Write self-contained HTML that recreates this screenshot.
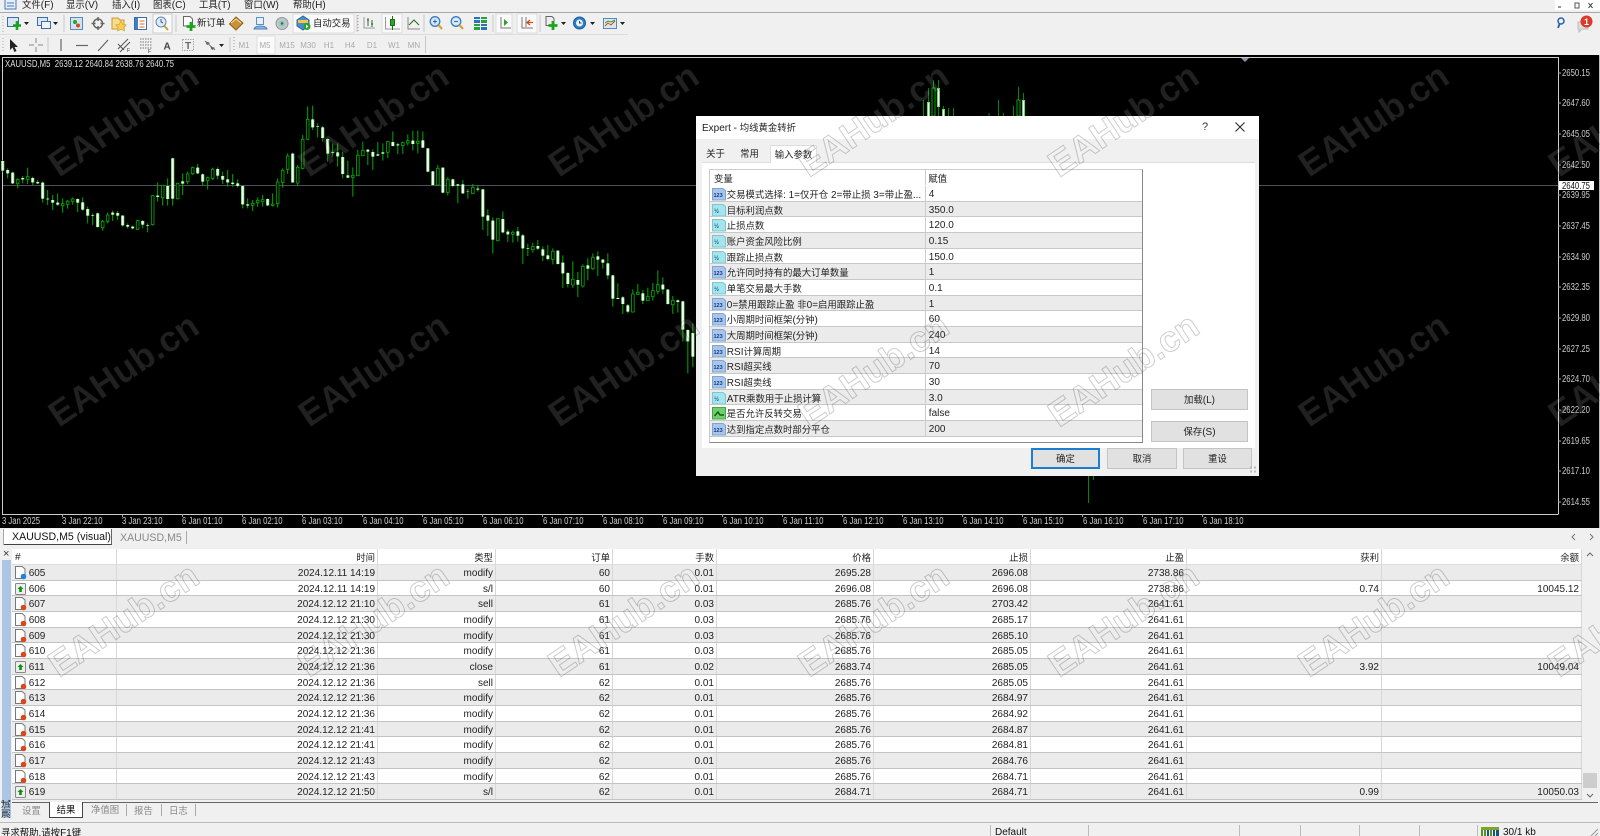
<!DOCTYPE html>
<html><head><meta charset="utf-8"><title>MT4</title>
<style>
html,body{margin:0;padding:0;width:1600px;height:836px;overflow:hidden;background:#f0f0f0}
#w{position:absolute;left:0;top:0;width:1600px;height:836px;overflow:hidden;filter:blur(.3px);font:10px/15px "Liberation Sans","Noto Sans CJK SC",sans-serif;color:#222;background:#f0f0f0}
em{font-style:normal;font-size:9.4px}
.a{position:absolute;white-space:nowrap}
svg{display:block}
.r{display:grid;grid-template-columns:105px 261px 118px 117px 104px 157px 157px 156px 195px 200px;grid-template-rows:14.67px;height:15.67px;line-height:17px;box-sizing:border-box;border-bottom:1px solid #c4c4c4;background:#fff}
.r.g{background:#ebebeb}
.r>div{border-right:1px solid #d8d8d8;text-align:right;padding-right:2px;box-sizing:border-box;overflow:hidden}
.r>div:first-child{text-align:left;padding-left:16.7px;position:relative}
.r>div:first-child svg{position:absolute;left:2px;top:1px}
.r.h{height:16.3px;grid-template-rows:15.3px;border-bottom:1px solid #ddd}
.p{display:grid;grid-template-columns:216.3px 217.7px;grid-template-rows:14.67px;height:15.67px;line-height:17px;box-sizing:border-box;border-bottom:1px solid #c8c8c8;background:#fff}
.p.g{background:#ebebeb}
.p>div{box-sizing:border-box;overflow:hidden;white-space:nowrap}
.p>div:first-child{padding-left:16.8px;border-right:1px solid #ccc;position:relative}
.p>div:first-child svg{position:absolute;left:2px;top:1px}
.p>div:last-child{padding-left:2.5px}
.b{position:absolute;box-sizing:border-box;background:#e1e1e1;border:1px solid #c4c4c4;text-align:center;line-height:19px}
</style></head><body><div id="w">

<svg width="0" height="0" style="position:absolute">
<symbol id="dr" viewBox="0 0 14 14"><path d="M1.500 .5H8L11 3V12.500H1.500Z" fill="#fff" stroke="#777"/><circle cx="9.500" cy="10.500" r="2.800" fill="#d9481c"/></symbol>
<symbol id="db" viewBox="0 0 14 14"><path d="M1.500 .5H8L11 3V12.500H1.500Z" fill="#fff" stroke="#777"/><circle cx="9.500" cy="10.500" r="2.800" fill="#1d83d4"/></symbol>
<symbol id="dg" viewBox="0 0 14 14"><rect x="1.500" y="1.500" width="10" height="11" rx="1" fill="#eee" stroke="#888"/><path d="M6.500 4L9.500 7H7.800V10H5.200V7H3.500Z" fill="#0a930a"/></symbol>
<symbol id="pb" viewBox="0 0 14 14"><path d="M.5 1.500H11L13.500 3.500V13H.5Z" fill="#a8c6ea" stroke="#7fa5d3"/><text x="1.500" y="10" font-size="5.500" font-weight="bold" fill="#123a8c" font-family="Liberation Sans">123</text></symbol>
<symbol id="pt" viewBox="0 0 14 14"><path d="M.5 1.500H11L13.500 3.500V13H.5Z" fill="#a5e4ec" stroke="#79c8d4"/><text x="2" y="10" font-size="6" font-weight="bold" fill="#0f6d8c" font-family="Liberation Sans">½</text></symbol>
<symbol id="pg" viewBox="0 0 14 14"><rect x=".5" y="1.500" width="13" height="11.500" fill="#6fcf6f" stroke="#46a646"/><path d="M2.500 10L6 6L8 9H12" fill="none" stroke="#0d5f0d" stroke-width="1.400"/></symbol>
</svg>

<!-- MENU -->
<div class="a" style="left:0;top:0;width:1600px;height:12px;background:#f0f0f0;border-bottom:1px solid #a8a8a8;overflow:hidden;line-height:10px">
<svg class="a" style="left:4px;top:-3px" width="13" height="13"><rect x="1" y="1" width="11" height="11" fill="#e6eefa" stroke="#4a78b8"/><path d="M3 6h7M3 9h7" stroke="#4a78b8"/></svg>
<span class="a" style="left:22px;top:0"><em>文件</em>(F)</span>
<span class="a" style="left:66px;top:0"><em>显示</em>(V)</span>
<span class="a" style="left:112px;top:0"><em>插入</em>(I)</span>
<span class="a" style="left:153px;top:0"><em>图表</em>(C)</span>
<span class="a" style="left:199px;top:0"><em>工具</em>(T)</span>
<span class="a" style="left:244px;top:0"><em>窗口</em>(W)</span>
<span class="a" style="left:293px;top:0"><em>帮助</em>(H)</span>
<div class="a" style="left:1555px;top:0;width:45px;height:10px;background:#fff"></div>
<svg class="a" style="left:1555px;top:0" width="45" height="11"><path d="M3 7h3" stroke="#333"/><rect x="20" y="3" width="4" height="5" fill="none" stroke="#555"/><path d="M33.500 3l4 5m0-5l-4 5" stroke="#333"/></svg>
</div>

<!-- TOOLBARS -->
<svg class="a" style="left:0;top:13px" width="1600" height="42" viewBox="0 13 1600 42" font-family="Liberation Sans,Noto Sans CJK SC,sans-serif">
<defs><path id="ar" d="M0 0h5l-2.500 3z" fill="#222"/></defs>
<path d="M3 16v16M3 38v14" stroke="#aaa" stroke-dasharray="1 2"/>
<path d="M64 15v17M176 15v17M357 15v17M424 15v17M493 15v17M540 15v17M48 37v15M230 37v15M425.500 36v17" stroke="#c8c8c8"/>
<path d="M234 37v15M358 15v17" stroke="#999" stroke-dasharray="1 2"/>
<path d="M0 34.500H628" stroke="#ddd"/>
<rect x="153" y="14" width="19" height="19" fill="#fafafa" stroke="#ccc"/>
<rect x="293" y="14" width="61" height="19" fill="#fafafa" stroke="#ddd"/>
<rect x="382" y="14" width="20" height="19" fill="#fafafa" stroke="#ddd"/>
<rect x="496" y="14" width="16" height="19" fill="#fafafa" stroke="#ddd"/>
<rect x="517" y="14" width="20" height="19" fill="#fafafa" stroke="#ddd"/>
<rect x="257" y="36" width="18" height="18" fill="#fafafa" stroke="#ddd"/>
<rect x="7.500" y="17.500" width="11" height="9" fill="#d9e6f5" stroke="#3a6ea5"/><path d="M17 21v9M13 25.500h8" stroke="#1ba51b" stroke-width="2.600"/>
<use href="#ar" x="24" y="22"/>
<rect x="37.500" y="17.500" width="10" height="8" fill="#dbe7f5" stroke="#3a6ea5"/><rect x="41.500" y="21.500" width="9" height="7" fill="#eef3fa" stroke="#3a6ea5"/>
<use href="#ar" x="53" y="22"/>
<rect x="70.500" y="17.500" width="12" height="12" fill="#cfe3f5" stroke="#5a8ab5"/><circle cx="75" cy="22" r="2" fill="#27a327"/><circle cx="78" cy="25.500" r="2" fill="#d9481c"/>
<circle cx="98" cy="23.500" r="4.500" fill="none" stroke="#666" stroke-width="1.500"/><path d="M98 17v4M98 26v4M91.500 23.500h4M100.500 23.500h4" stroke="#666" stroke-width="1.500"/>
<path d="M112 18h6l2 2h4v9h-12z" fill="#f8dc8a" stroke="#c79a2e"/><path d="M121 21l1.800 3.500 3.500.5-2.500 2.500.6 3.500-3.400-1.800-3.400 1.800.6-3.500-2.500-2.500 3.500-.5z" fill="#f6cf4f" stroke="#c79a2e" stroke-width=".6"/>
<rect x="134.500" y="17.500" width="12" height="12" fill="#fff" stroke="#3a6ea5"/><rect x="135" y="18" width="3" height="11" fill="#3f7fc6"/><path d="M139.500 21h5M139.500 24h5M139.500 27h5" stroke="#d9682c"/>
<circle cx="161" cy="22" r="5" fill="#dfeaf7" stroke="#5a8ab5"/><path d="M161 19v3l2 1" stroke="#555" fill="none"/><path d="M164.500 26l3.500 4" stroke="#c9a033" stroke-width="2"/>
<path d="M183.500 16.500H190l2.500 2.500v7H183.500Z" fill="#fff" stroke="#666"/><path d="M191 22v9M186.500 26.500h9" stroke="#1ba51b" stroke-width="2.800"/>
<text x="197" y="26" font-size="9.400" fill="#222">新订单</text>
<path d="M236 17l7 6-7 7-6.500-6z" fill="#c9913a" stroke="#8a6418"/><path d="M231 23l5-4 5 4" stroke="#f6df9a" fill="none"/>
<path d="M256.500 17.500h7v7h-7z" fill="#e8f0fa" stroke="#5d8fc8"/><path d="M254 29c1-4 12-4 13 0z" fill="#8db5e2" stroke="#4f82bc"/>
<circle cx="282" cy="23.500" r="6" fill="#bcc7cf" stroke="#8d989f"/><circle cx="282" cy="23.500" r="3" fill="#9fc0b4"/><circle cx="282" cy="23.500" r="1.200" fill="#1f7a3a"/>
<path d="M297 20l6-4 6 4v6l-6 4-6-4z" fill="#4b8dcb" stroke="#2e65a0"/><path d="M298 20h10v3h-10z" fill="#f3c84a"/><circle cx="307" cy="26.500" r="3.500" fill="#20a52a"/><path d="M306 24.500l2.500 2-2.500 2z" fill="#fff"/>
<text x="313" y="26.500" font-size="9.400" fill="#222">自动交易</text>
<path d="M364 17v11h11" stroke="#999" fill="none"/><path d="M368 18v8M367 20h2M372 20v7M371 24h2" stroke="#2c6b2c" fill="none"/>
<path d="M385.500 17v12H400" stroke="#999" fill="none"/><path d="M392.500 16v14" stroke="#1d6d1d"/><rect x="390.500" y="19.500" width="4" height="6" fill="#2ba52b" stroke="#1d6d1d"/>
<path d="M408 17v12h12" fill="none" stroke="#888"/><path d="M409 25l5-5 5 5" fill="none" stroke="#2c6b2c" stroke-width="1.100"/>
<circle cx="435" cy="21.500" r="4.800" fill="#d6e8f8" stroke="#3a7cc0" stroke-width="1.300"/><path d="M433 21.500h4M435 19.500v4" stroke="#2a6cb0"/><path d="M438.500 25l3.500 4" stroke="#d5a52f" stroke-width="2.200"/>
<circle cx="456" cy="21.500" r="4.800" fill="#d6e8f8" stroke="#3a7cc0" stroke-width="1.300"/><path d="M454 21.500h4" stroke="#2a6cb0"/><path d="M459.500 25l3.500 4" stroke="#d5a52f" stroke-width="2.200"/>
<rect x="474" y="17" width="6" height="6" fill="#2f6fb5"/><rect x="481" y="17" width="6" height="6" fill="#2e9e3c"/><rect x="474" y="24" width="6" height="6" fill="#2e9e3c"/><rect x="481" y="24" width="6" height="6" fill="#2f6fb5"/><path d="M474 19.500h13M474 26.500h13" stroke="#dff"/>
<path d="M501 17v11h10" fill="none" stroke="#777"/><path d="M504 19l4 3.500-4 3.500z" fill="#22a52a"/>
<path d="M522 17v11h11" fill="none" stroke="#777"/><path d="M526 17v10" stroke="#777"/><path d="M533 22.500h-5M530 20l-3 2.500 3 2.500" fill="none" stroke="#d9481c" stroke-width="1.300"/>
<path d="M546 16.500h6l2 2v7h-8z" fill="#eee" stroke="#666"/><path d="M553 21v9M548.500 25.500h9" stroke="#1ba51b" stroke-width="2.800"/>
<use href="#ar" x="561" y="22"/>
<circle cx="579.500" cy="23" r="6" fill="#2b7fc8" stroke="#195c9a"/><circle cx="579.500" cy="23" r="3.500" fill="#eaf3fb"/><path d="M579.500 21v2h2" stroke="#444" fill="none"/>
<use href="#ar" x="590" y="22"/>
<rect x="603.500" y="18.500" width="13" height="10" fill="#dbe8f4" stroke="#5a8ab5"/><path d="M605 26l3-3 3 2 4-4" stroke="#d9481c" fill="none"/><path d="M605 23l3-2 3 1 4-2" stroke="#27a327" fill="none"/>
<use href="#ar" x="620" y="22"/>
<path d="M10 39v11l2.500-2.500 2 4.500 2-1-2-4h3.500z" fill="#222"/>
<path d="M36 38v14M29 45h14" stroke="#888"/><path d="M34 43h4v4h-4z" fill="#f0f0f0"/>
<path d="M61 39v12" stroke="#666" stroke-width="1.200"/>
<path d="M76 45.500h12" stroke="#666" stroke-width="1.200"/>
<path d="M98 51l10-11" stroke="#666" stroke-width="1.200"/>
<path d="M118 49l10-10M120 52l10-10M118 44l6 6" stroke="#555" fill="none"/><text x="127" y="52" font-size="5" fill="#333">F</text>
<path d="M140 39h12M140 42h12M140 45h12M140 48h12" stroke="#777" stroke-dasharray="1.500 1"/><text x="148" y="53" font-size="5" fill="#333">F</text>
<text x="163.500" y="49.500" font-size="10" font-weight="bold" fill="#444">A</text>
<rect x="182.500" y="39.500" width="11" height="11" fill="none" stroke="#aaa" stroke-dasharray="1.500 1"/><text x="185" y="49" font-size="10" font-weight="bold" fill="#666">T</text>
<path d="M205 41l5 2-3 2zM210 46l5 2-3 2z" fill="#444"/><path d="M205 41l10 9" stroke="#777"/>
<use href="#ar" x="219" y="44"/>
<g font-size="8" fill="#aaa" text-anchor="middle">
<text x="244" y="48">M1</text><text x="265" y="48">M5</text><text x="287" y="48">M15</text><text x="308" y="48">M30</text><text x="329" y="48">H1</text><text x="350" y="48">H4</text><text x="372" y="48">D1</text><text x="394" y="48">W1</text><text x="414" y="48">MN</text>
</g>
<circle cx="1561" cy="21" r="3" fill="none" stroke="#2a5fa8" stroke-width="1.500"/><path d="M1559.500 24l-1.500 4" stroke="#2a5fa8" stroke-width="1.800"/>
<path d="M1578 22h10v7h-6l-3 3v-3h-1z" fill="#ddd" stroke="#bbb"/><circle cx="1586.500" cy="21.500" r="6" fill="#d93a2b"/><text x="1586.500" y="25" font-size="9" font-weight="bold" fill="#fff" text-anchor="middle">1</text>
</svg>

<!-- CHART -->
<svg class="a" style="left:0;top:55px" width="1600" height="473" viewBox="0 55 1600 473" font-family="Liberation Sans,sans-serif">
<defs>
<path id="w1" d="M8 303V332M23 330V340M38 338V370M68 354V358M98 354V367M113 366V370M128 368V416M143 416V418M158 420V428M173 428V434M233 417V428M248 427V449M263 447V467M278 466V468M293 460V501M338 458V464M353 459V467M368 467V496M383 495V500M398 500V505M428 483V494M443 495V497M473 407V411M503 378V417M518 295V416M548 364V371M593 323V340M608 343V365M653 327V347M668 348V359M683 358V367M698 368V372M713 370V378M728 378V433M743 433V437M803 417V436M878 281V367M938 178V202M953 198V200M968 202V234M983 237V281M998 276V278M1013 277V289M1028 291V342"/>
<path id="w2" d="M25 256V263M85 179V185M100 186V200M115 193V197M130 187V191M160 156V168M175 163V166M220 152V162M250 151V173M265 175V245M280 244V285M310 233V308M340 268V288M355 283V287M370 283V310M385 305V306M415 296V299M430 298V380M445 376V392M460 392V449M490 387V427M505 425V433M535 424V437M550 436V475M565 475V477M595 468V476M610 478V497M625 496V507M655 482V522M670 518V550M685 549V582M715 570V584M745 526V536M775 499V509M790 509V518M805 520V556M820 556V626M835 624V627M850 622V642M865 646V665M910 610V632M970 584V598M985 599V642M1015 631V636M1030 634V719M1045 720V754M1060 729V800"/>
</defs>
<rect x="0" y="55" width="1600" height="473" fill="#000"/>
<path d="M2.500 57V514.500H1558M2.500 57.500H1558.500V514.500" fill="none" stroke="#ccc"/>
<path d="M3 185.500H1558" stroke="#4c5058"/>
<path d="M1241 58h8l-4 4z" fill="#8995a5"/>
<text x="5" y="67" font-size="10" fill="#ddd" textLength="169" lengthAdjust="spacingAndGlyphs" xml:space="preserve">XAUUSD,M5  2639.12 2640.84 2638.76 2640.75</text>

<g transform="translate(0,60) scale(.33333)" fill="none">
<path stroke="#0a0" stroke-width="3" d="M8 300V335M23 325V355M38 335V372M53 355V385M68 348V370M83 323V372M98 350V375M113 360V372M128 365V428M143 390V435M158 405V450M173 400V438M188 415V458M203 420V446M218 412V434M233 415V456M248 412V452M263 440V490M278 460V495M293 458V503M308 480V512M323 458V490M338 452V483M353 453V480M368 465V500M383 490V505M398 497V508M413 480V510M428 480V505M443 490V517M458 405V497M473 367V425M488 375V437M503 355V437M518 293V437M533 368V418M548 340V405M563 335V372M578 320V345M593 312V342M608 340V378M623 350V388M638 323V360M653 322V358M668 335V372M683 330V380M698 342V380M713 358V382M728 377V445M743 415V445M758 420V453M773 412V440M788 405V440M803 415V438M818 400V440M833 355V442M848 325V383M863 280V342M878 278V369M893 315V378M908 225V328M923 140V240M938 137V210M953 190V232M968 198V245M983 235V305M998 250V290M1013 250V320M1028 275V355"/>
<path stroke="#0a0" stroke-width="2.500" fill="#000" d="M49 358h8v13h-8zM79 350h8v8h-8zM184 431h8v6h-8zM199 424h8v9h-8zM214 417h8v7h-8zM304 484h8v19h-8zM319 465h8v19h-8zM409 482h8v26h-8zM454 407h8v87h-8zM484 376h8v37h-8zM529 370h8v46h-8zM559 342h8v23h-8zM574 323h8v18h-8zM619 353h8v9h-8zM634 328h8v27h-8zM754 430h8v6h-8zM769 421h8v7h-8zM784 419h8v6h-8zM814 432h8v4h-8zM829 366h8v65h-8zM844 331h8v36h-8zM859 288h8v40h-8zM889 322h8v47h-8zM904 238h8v87h-8zM919 178h8v60h-8z"/>
<use href="#w1" stroke="#4c4" stroke-width="10"/>
<use href="#w1" stroke="#fff" stroke-width="6"/>
</g>
<g transform="translate(-.5,0)"><g transform="translate(340,90) scale(.33333)" fill="none">
<path stroke="#0a0" stroke-width="3" d="M25 212V265M40 232V320M55 180V258M70 155V198M85 178V225M100 178V240M115 156V198M130 160V212M145 153V204M160 124V170M175 158V192M190 155V192M205 133V167M220 122V182M235 122V190M250 124V175M265 174V247M280 243V287M295 225V288M310 232V310M325 262V316M340 266V292M355 282V340M370 270V312M385 297V326M400 282V312M415 285V305M430 296V420M445 358V438M460 382V491M475 385V453M490 364V430M505 418V456M520 422V458M535 411V455M550 432V522M565 461V498M580 458V488M595 450V480M610 469V513M625 465V512M640 475V523M655 481V524M670 496V594M685 546V592M700 514V594M715 546V621M730 523V593M745 505V571M760 490V540M775 484V558M790 507V536M805 490V568M820 555V650M835 580V627M850 618V672M865 642V670M880 598V668M895 582V615M910 600V642M925 593V633M940 579V632M955 541V612M970 562V612M985 597V644M1000 618V672M1015 628V668M1030 632V755M1045 718V850M1060 700V831"/>
<path stroke="#0a0" stroke-width="2.500" fill="#000" d="M36 256h8v6h-8zM51 196h8v61h-8zM66 181h8v16h-8zM141 155h8v32h-8zM186 158h8v9h-8zM201 152h8v7h-8zM231 154h8v6h-8zM291 235h8v50h-8zM321 268h8v39h-8zM396 292h8v19h-8zM471 386h8v66h-8zM516 427h8v6h-8zM576 470h8v9h-8zM636 484h8v24h-8zM696 568h8v17h-8zM726 529h8v59h-8zM756 502h8v34h-8zM876 612h8v54h-8zM891 607h8v6h-8zM921 620h8v12h-8zM936 602h8v18h-8zM951 584h8v20h-8zM996 631h8v13h-8z"/>
<use href="#w2" stroke="#4c4" stroke-width="10"/>
<use href="#w2" stroke="#fff" stroke-width="6"/>
</g></g>
<path stroke="#080" d="M923.500 100V116M928.500 88V116M933.500 80V116M938.500 80V116M943.500 106V116M948.500 108V116M953.500 108V116M989 113V116M998.500 100V116M1003.500 113V116M1013.500 106V116M1018.500 87V116M1023.500 93V116M1088.500 476V503M1093.500 476V480"/>
<path stroke="#6d6" stroke-width="3" d="M928.500 102V116M938.500 88V107M943.500 109V116M1023.500 100V116"/>
<path stroke="#fff" d="M928.500 103V116M938.500 89V106M943.500 110V116M1023.500 101V116"/>
<path stroke="#0a0" fill="#000" d="M932 88h3v28h-3zM1017 100h3v16h-3z"/>

<path stroke="#aaa" d="M1558 73h3M1558 103h3M1558 134h3M1558 165h3M1558 195h3M1558 226h3M1558 257h3M1558 287h3M1558 318h3M1558 349h3M1558 379h3M1558 410h3M1558 441h3M1558 471h3M1558 502h3"/>
<g font-size="10" fill="#ccc">
<text x="1562" y="76" textLength="28" lengthAdjust="spacingAndGlyphs">2650.15</text>
<text x="1562" y="106" textLength="28" lengthAdjust="spacingAndGlyphs">2647.60</text>
<text x="1562" y="137" textLength="28" lengthAdjust="spacingAndGlyphs">2645.05</text>
<text x="1562" y="168" textLength="28" lengthAdjust="spacingAndGlyphs">2642.50</text>
<text x="1562" y="198" textLength="28" lengthAdjust="spacingAndGlyphs">2639.95</text>
<text x="1562" y="229" textLength="28" lengthAdjust="spacingAndGlyphs">2637.45</text>
<text x="1562" y="260" textLength="28" lengthAdjust="spacingAndGlyphs">2634.90</text>
<text x="1562" y="290" textLength="28" lengthAdjust="spacingAndGlyphs">2632.35</text>
<text x="1562" y="321" textLength="28" lengthAdjust="spacingAndGlyphs">2629.80</text>
<text x="1562" y="352" textLength="28" lengthAdjust="spacingAndGlyphs">2627.25</text>
<text x="1562" y="382" textLength="28" lengthAdjust="spacingAndGlyphs">2624.70</text>
<text x="1562" y="413" textLength="28" lengthAdjust="spacingAndGlyphs">2622.20</text>
<text x="1562" y="444" textLength="28" lengthAdjust="spacingAndGlyphs">2619.65</text>
<text x="1562" y="474" textLength="28" lengthAdjust="spacingAndGlyphs">2617.10</text>
<text x="1562" y="505" textLength="28" lengthAdjust="spacingAndGlyphs">2614.55</text>
</g>
<rect x="1559" y="181" width="35" height="9" fill="#fff"/>
<text x="1562" y="189" font-size="10" fill="#111" textLength="28" lengthAdjust="spacingAndGlyphs">2640.75</text>

<path stroke="#aaa" d="M62.500 514v3M122.500 514v3M182.500 514v3M242.500 514v3M302.500 514v3M362.500 514v3M422.500 514v3M482.500 514v3M542.500 514v3M602.500 514v3M662.500 514v3M722.500 514v3M782.500 514v3M842.500 514v3M902.500 514v3M962.500 514v3M1022.500 514v3M1082.500 514v3M1142.500 514v3M1202.500 514v3"/>
<g font-size="10" fill="#ccc">
<text x="2" y="524" textLength="38" lengthAdjust="spacingAndGlyphs">3 Jan 2025</text>
<text x="62" y="524" textLength="40.500" lengthAdjust="spacingAndGlyphs">3 Jan 22:10</text>
<text x="122" y="524" textLength="40.500" lengthAdjust="spacingAndGlyphs">3 Jan 23:10</text>
<text x="182" y="524" textLength="40.500" lengthAdjust="spacingAndGlyphs">6 Jan 01:10</text>
<text x="242" y="524" textLength="40.500" lengthAdjust="spacingAndGlyphs">6 Jan 02:10</text>
<text x="302" y="524" textLength="40.500" lengthAdjust="spacingAndGlyphs">6 Jan 03:10</text>
<text x="363" y="524" textLength="40.500" lengthAdjust="spacingAndGlyphs">6 Jan 04:10</text>
<text x="423" y="524" textLength="40.500" lengthAdjust="spacingAndGlyphs">6 Jan 05:10</text>
<text x="483" y="524" textLength="40.500" lengthAdjust="spacingAndGlyphs">6 Jan 06:10</text>
<text x="543" y="524" textLength="40.500" lengthAdjust="spacingAndGlyphs">6 Jan 07:10</text>
<text x="603" y="524" textLength="40.500" lengthAdjust="spacingAndGlyphs">6 Jan 08:10</text>
<text x="663" y="524" textLength="40.500" lengthAdjust="spacingAndGlyphs">6 Jan 09:10</text>
<text x="723" y="524" textLength="40.500" lengthAdjust="spacingAndGlyphs">6 Jan 10:10</text>
<text x="783" y="524" textLength="40.500" lengthAdjust="spacingAndGlyphs">6 Jan 11:10</text>
<text x="843" y="524" textLength="40.500" lengthAdjust="spacingAndGlyphs">6 Jan 12:10</text>
<text x="903" y="524" textLength="40.500" lengthAdjust="spacingAndGlyphs">6 Jan 13:10</text>
<text x="963" y="524" textLength="40.500" lengthAdjust="spacingAndGlyphs">6 Jan 14:10</text>
<text x="1023" y="524" textLength="40.500" lengthAdjust="spacingAndGlyphs">6 Jan 15:10</text>
<text x="1083" y="524" textLength="40.500" lengthAdjust="spacingAndGlyphs">6 Jan 16:10</text>
<text x="1143" y="524" textLength="40.500" lengthAdjust="spacingAndGlyphs">6 Jan 17:10</text>
<text x="1203" y="524" textLength="40.500" lengthAdjust="spacingAndGlyphs">6 Jan 18:10</text>
</g>
<path d="M1599.500 55V528" stroke="#bbb"/>
</svg>

<!-- DIALOG -->
<div class="a" style="left:696px;top:116px;width:563px;height:360px;background:#f0f0f0">
<div class="a" style="left:0;top:0;width:563px;height:23px;background:#fff;line-height:23px;padding-left:6px;box-sizing:border-box">Expert - <em>均线黄金转折</em></div>
<span class="a" style="left:506px;top:4px;font-size:11px;color:#333">?</span>
<svg class="a" style="left:539px;top:6px" width="10" height="10"><path d="M.5 .5l9 9m0-9l-9 9" stroke="#222"/></svg>
<div class="a" style="left:2px;top:29px;width:35px;height:17px;line-height:18px;text-align:center;background:#f0f0f0"><em>关于</em></div>
<div class="a" style="left:37px;top:29px;width:33px;height:17px;line-height:18px;text-align:center;background:#f0f0f0"><em>常用</em></div>
<div class="a" style="left:6px;top:46px;width:552.500px;height:286px;background:#fff;border-top:1px solid #ddd;box-sizing:border-box"></div>
<div class="a" style="left:74px;top:29px;width:47px;height:18px;line-height:17px;text-align:center;background:#fff;border:1px solid #ddd;border-bottom:0;box-sizing:border-box"><em>输入参数</em></div>

<div class="a" style="left:13px;top:53px;width:434px;height:274px;background:#fff;border:1px solid;border-color:#ccc #888 #888 #ccc;box-sizing:border-box;overflow:hidden;white-space:normal">
<div class="p" style="height:16px;border-bottom:0"><div style="padding-left:4px"><em>变量</em></div><div style="padding-left:2px"><em>赋值</em></div></div>
<div class="p"><div><svg width="14" height="14"><use href="#pb"/></svg><em>交易模式选择</em>: 1=<em>仅开仓</em> 2=<em>带止损</em> 3=<em>带止盈</em>...</div><div>4</div></div>
<div class="p g"><div><svg width="14" height="14"><use href="#pt"/></svg><em>目标利润点数</em></div><div>350.0</div></div>
<div class="p"><div><svg width="14" height="14"><use href="#pt"/></svg><em>止损点数</em></div><div>120.0</div></div>
<div class="p g"><div><svg width="14" height="14"><use href="#pt"/></svg><em>账户资金风险比例</em></div><div>0.15</div></div>
<div class="p"><div><svg width="14" height="14"><use href="#pt"/></svg><em>跟踪止损点数</em></div><div>150.0</div></div>
<div class="p g"><div><svg width="14" height="14"><use href="#pb"/></svg><em>允许同时持有的最大订单数量</em></div><div>1</div></div>
<div class="p"><div><svg width="14" height="14"><use href="#pt"/></svg><em>单笔交易最大手数</em></div><div>0.1</div></div>
<div class="p g"><div><svg width="14" height="14"><use href="#pb"/></svg>0=<em>禁用跟踪止盈</em> <em>非</em>0=<em>启用跟踪止盈</em></div><div>1</div></div>
<div class="p"><div><svg width="14" height="14"><use href="#pb"/></svg><em>小周期时间框架</em>(<em>分钟</em>)</div><div>60</div></div>
<div class="p g"><div><svg width="14" height="14"><use href="#pb"/></svg><em>大周期时间框架</em>(<em>分钟</em>)</div><div>240</div></div>
<div class="p"><div><svg width="14" height="14"><use href="#pb"/></svg>RSI<em>计算周期</em></div><div>14</div></div>
<div class="p g"><div><svg width="14" height="14"><use href="#pb"/></svg>RSI<em>超买线</em></div><div>70</div></div>
<div class="p"><div><svg width="14" height="14"><use href="#pb"/></svg>RSI<em>超卖线</em></div><div>30</div></div>
<div class="p g"><div><svg width="14" height="14"><use href="#pt"/></svg>ATR<em>乘数用于止损计算</em></div><div>3.0</div></div>
<div class="p"><div><svg width="14" height="14"><use href="#pg"/></svg><em>是否允许反转交易</em></div><div>false</div></div>
<div class="p g"><div><svg width="14" height="14"><use href="#pb"/></svg><em>达到指定点数时部分平仓</em></div><div>200</div></div>
</div>

<div class="b" style="left:455px;top:273px;width:97px;height:21px"><em>加载</em>(L)</div>
<div class="b" style="left:455px;top:305px;width:97px;height:21px"><em>保存</em>(S)</div>
<div class="b" style="left:335px;top:332px;width:69px;height:21px;border:2px solid #1a7fd0;line-height:18px"><em>确定</em></div>
<div class="b" style="left:411px;top:332px;width:70px;height:21px"><em>取消</em></div>
<div class="b" style="left:487px;top:332px;width:69px;height:21px"><em>重设</em></div>
<svg class="a" style="left:553px;top:350px" width="8" height="8"><path d="M1 1.500h2M5 1.500h2M1 5.500h2M5 5.500h2" stroke="#bbb" stroke-width="2"/></svg>
</div>

<!-- TERMINAL TABS -->
<div class="a" style="left:0;top:528px;width:1600px;height:20px;background:#f0f0f0"></div>
<div class="a" style="left:3px;top:529px;width:1px;height:16px;background:#aaa"></div>
<div class="a" style="left:4px;top:529px;width:108px;height:16px;background:#fff;border-right:1px solid #666;border-bottom:1px solid #444;box-sizing:border-box;font-size:10.600px;line-height:17px;padding-left:8px;color:#111">XAUUSD,M5 (visual)</div>
<div class="a" style="left:120px;top:531px;font-size:10.600px;color:#888">XAUUSD,M5</div>
<div class="a" style="left:186px;top:531px;width:1px;height:13px;background:#aaa"></div>
<svg class="a" style="left:1570px;top:533px" width="24" height="8"><path d="M5 1L2 4l3 3M20 1l3 3-3 3" fill="none" stroke="#777"/></svg>

<!-- LEFT STRIP -->
<div class="a" style="left:3px;top:547px;font-size:11px;color:#333">×</div>
<div class="a" style="left:2px;top:560px;width:9px;height:258px;background:#a9c6e4"></div>
<div class="a" style="left:-3px;top:804px;width:19px;height:10px;line-height:10px;transform:rotate(-90deg);color:#222;text-align:center"><em>测试</em></div>

<!-- TABLE -->
<div class="a" style="left:12px;top:548.700px;width:1570px;white-space:normal">
<div class="r h"><div style="padding-left:3px">#</div><div><em>时间</em></div><div><em>类型</em></div><div><em>订单</em></div><div><em>手数</em></div><div><em>价格</em></div><div><em>止损</em></div><div><em>止盈</em></div><div><em>获利</em></div><div><em>余额</em></div></div>
<div class="r g"><div><svg width="14" height="14"><use href="#db"/></svg>605</div><div>2024.12.11 14:19</div><div>modify</div><div>60</div><div>0.01</div><div>2695.28</div><div>2696.08</div><div>2738.86</div><div></div><div></div></div>
<div class="r"><div><svg width="14" height="14"><use href="#dg"/></svg>606</div><div>2024.12.11 14:19</div><div>s/l</div><div>60</div><div>0.01</div><div>2696.08</div><div>2696.08</div><div>2738.86</div><div>0.74</div><div>10045.12</div></div>
<div class="r g"><div><svg width="14" height="14"><use href="#dr"/></svg>607</div><div>2024.12.12 21:10</div><div>sell</div><div>61</div><div>0.03</div><div>2685.76</div><div>2703.42</div><div>2641.61</div><div></div><div></div></div>
<div class="r"><div><svg width="14" height="14"><use href="#dr"/></svg>608</div><div>2024.12.12 21:30</div><div>modify</div><div>61</div><div>0.03</div><div>2685.76</div><div>2685.17</div><div>2641.61</div><div></div><div></div></div>
<div class="r g"><div><svg width="14" height="14"><use href="#dr"/></svg>609</div><div>2024.12.12 21:30</div><div>modify</div><div>61</div><div>0.03</div><div>2685.76</div><div>2685.10</div><div>2641.61</div><div></div><div></div></div>
<div class="r"><div><svg width="14" height="14"><use href="#dr"/></svg>610</div><div>2024.12.12 21:36</div><div>modify</div><div>61</div><div>0.03</div><div>2685.76</div><div>2685.05</div><div>2641.61</div><div></div><div></div></div>
<div class="r g"><div><svg width="14" height="14"><use href="#dg"/></svg>611</div><div>2024.12.12 21:36</div><div>close</div><div>61</div><div>0.02</div><div>2683.74</div><div>2685.05</div><div>2641.61</div><div>3.92</div><div>10049.04</div></div>
<div class="r"><div><svg width="14" height="14"><use href="#dr"/></svg>612</div><div>2024.12.12 21:36</div><div>sell</div><div>62</div><div>0.01</div><div>2685.76</div><div>2685.05</div><div>2641.61</div><div></div><div></div></div>
<div class="r g"><div><svg width="14" height="14"><use href="#dr"/></svg>613</div><div>2024.12.12 21:36</div><div>modify</div><div>62</div><div>0.01</div><div>2685.76</div><div>2684.97</div><div>2641.61</div><div></div><div></div></div>
<div class="r"><div><svg width="14" height="14"><use href="#dr"/></svg>614</div><div>2024.12.12 21:36</div><div>modify</div><div>62</div><div>0.01</div><div>2685.76</div><div>2684.92</div><div>2641.61</div><div></div><div></div></div>
<div class="r g"><div><svg width="14" height="14"><use href="#dr"/></svg>615</div><div>2024.12.12 21:41</div><div>modify</div><div>62</div><div>0.01</div><div>2685.76</div><div>2684.87</div><div>2641.61</div><div></div><div></div></div>
<div class="r"><div><svg width="14" height="14"><use href="#dr"/></svg>616</div><div>2024.12.12 21:41</div><div>modify</div><div>62</div><div>0.01</div><div>2685.76</div><div>2684.81</div><div>2641.61</div><div></div><div></div></div>
<div class="r g"><div><svg width="14" height="14"><use href="#dr"/></svg>617</div><div>2024.12.12 21:43</div><div>modify</div><div>62</div><div>0.01</div><div>2685.76</div><div>2684.76</div><div>2641.61</div><div></div><div></div></div>
<div class="r"><div><svg width="14" height="14"><use href="#dr"/></svg>618</div><div>2024.12.12 21:43</div><div>modify</div><div>62</div><div>0.01</div><div>2685.76</div><div>2684.71</div><div>2641.61</div><div></div><div></div></div>
<div class="r g"><div><svg width="14" height="14"><use href="#dg"/></svg>619</div><div>2024.12.12 21:50</div><div>s/l</div><div>62</div><div>0.01</div><div>2684.71</div><div>2684.71</div><div>2641.61</div><div>0.99</div><div>10050.03</div></div>
</div>
<!-- SCROLLBAR -->
<div class="a" style="left:1582px;top:549px;width:16px;height:253px;background:#f0f0f0"></div>
<svg class="a" style="left:1582px;top:549px" width="16" height="253"><path d="M5 7l3-3 3 3M5 245l3 3 3-3" fill="none" stroke="#666"/><rect x="1" y="224" width="14" height="15" fill="#cdcdcd"/></svg>

<!-- BOTTOM TABS -->
<div class="a" style="left:12px;top:802px;width:1586px;height:1px;background:#666"></div>
<div class="a" style="left:22px;top:803px;color:#888"><em>设置</em></div>
<div class="a" style="left:49px;top:802px;width:34px;height:16px;background:#fff;border:1px solid #444;border-top:0;box-sizing:border-box;text-align:center;line-height:15px;color:#111"><em>结果</em></div>
<div class="a" style="left:91px;top:802px;color:#888"><em>净值图</em></div>
<div class="a" style="left:126px;top:804px;width:1px;height:12px;background:#aaa"></div>
<div class="a" style="left:134px;top:803px;color:#888"><em>报告</em></div>
<div class="a" style="left:161px;top:804px;width:1px;height:12px;background:#aaa"></div>
<div class="a" style="left:169px;top:803px;color:#888"><em>日志</em></div>
<div class="a" style="left:195px;top:804px;width:1px;height:12px;background:#aaa"></div>

<!-- STATUS BAR -->
<div class="a" style="left:0;top:822px;width:1600px;height:1px;background:#bbb"></div>
<div class="a" style="left:0;top:823px;width:1600px;height:13px;overflow:hidden;line-height:18px;color:#111">
<div class="a" style="left:1px;top:1px;height:12px;overflow:hidden"><em>寻求帮助</em>,<em>请按</em>F1<em>键</em></div>
<div class="a" style="left:995px;top:1px;height:12px;overflow:hidden">Default</div>
<div class="a" style="left:1503px;top:1px;height:12px;overflow:hidden">30/1 kb</div>
<svg class="a" style="left:0;top:0" width="1600" height="13">
<path d="M990.500 2V13M1088.500 2V13M1239.500 2V13M1300.500 2V13M1359.500 2V13M1419.500 2V13M1477.500 2V13" stroke="#bbb"/>
<g><rect x="1481" y="4" width="2" height="9" fill="#5a8f22"/><rect x="1484" y="4" width="2" height="9" fill="#5a8f22"/><rect x="1487" y="7" width="2" height="6" fill="#17567f"/><rect x="1490" y="4" width="2" height="9" fill="#5a8f22"/><rect x="1493" y="6" width="2" height="7" fill="#17567f"/><rect x="1496" y="4" width="3" height="9" fill="#17567f"/><path d="M1481 4h18v3h-18z" fill="#7ea52a"/></g>
<path d="M1591 13l7-7M1595 13l3-3" stroke="#999"/>
</svg>
</div>

<!-- WATERMARK -->
<svg class="a" style="left:0;top:0;pointer-events:none" width="1600" height="836" font-family="Liberation Sans,sans-serif" font-size="36" font-weight="bold" fill="#fff" fill-opacity=".13" stroke="#000" stroke-opacity=".2" stroke-width="1">
<text transform="translate(59 178) rotate(-34)">EAHub.cn</text><text transform="translate(309 178) rotate(-34)">EAHub.cn</text><text transform="translate(559 178) rotate(-34)">EAHub.cn</text><text transform="translate(809 178) rotate(-34)">EAHub.cn</text><text transform="translate(1059 178) rotate(-34)">EAHub.cn</text><text transform="translate(1309 178) rotate(-34)">EAHub.cn</text><text transform="translate(1559 178) rotate(-34)">EAHub.cn</text>
<text transform="translate(59 428) rotate(-34)">EAHub.cn</text><text transform="translate(309 428) rotate(-34)">EAHub.cn</text><text transform="translate(559 428) rotate(-34)">EAHub.cn</text><text transform="translate(809 428) rotate(-34)">EAHub.cn</text><text transform="translate(1059 428) rotate(-34)">EAHub.cn</text><text transform="translate(1309 428) rotate(-34)">EAHub.cn</text><text transform="translate(1559 428) rotate(-34)">EAHub.cn</text>
<text transform="translate(59 678) rotate(-34)">EAHub.cn</text><text transform="translate(309 678) rotate(-34)">EAHub.cn</text><text transform="translate(559 678) rotate(-34)">EAHub.cn</text><text transform="translate(809 678) rotate(-34)">EAHub.cn</text><text transform="translate(1059 678) rotate(-34)">EAHub.cn</text><text transform="translate(1309 678) rotate(-34)">EAHub.cn</text><text transform="translate(1559 678) rotate(-34)">EAHub.cn</text>
</svg>
</div></body></html>
